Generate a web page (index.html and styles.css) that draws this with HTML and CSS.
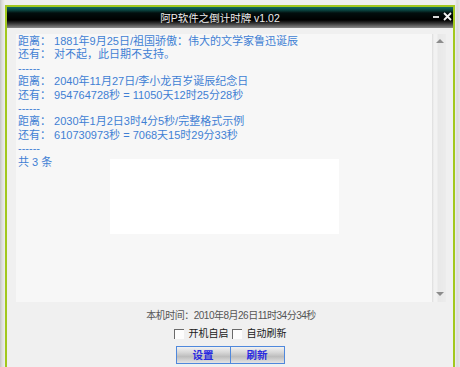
FILE: index.html
```html
<!DOCTYPE html>
<html lang="zh-CN">
  <head>
    <meta charset="UTF-8" />
    <title>阿P软件之倒计时牌 v1.02</title>
    <link rel="stylesheet" href="styles.css">
  </head>
  <body>
    <div class="window">
      <div class="titlebar">
        <span class="titlebar__text">阿P软件之倒计时牌 v1.02</span>
        <span class="titlebar__btns">
          <svg width="19" height="9" viewBox="0 0 19 9">
            <rect x="0" y="4" width="6" height="2" fill="#d8d8d8" />
            <path d="M11 1 L18 8 M18 1 L11 8" stroke="#f2f2f2" stroke-width="1.8" />
          </svg>
        </span>
      </div>
      <div class="main">
        <div class="memo">
          <div class="memo__text">
            <div class="line">距离： 1881年9月25日/祖国骄傲：伟大的文学家鲁迅诞辰</div>
            <div class="line">还有： 对不起，此日期不支持。</div>
            <div class="line">------</div>
            <div class="line">距离： 2040年11月27日/李小龙百岁诞辰纪念日</div>
            <div class="line">还有： 954764728秒 = 11050天12时25分28秒</div>
            <div class="line">------</div>
            <div class="line">距离： 2030年1月2日3时4分5秒/完整格式示例</div>
            <div class="line">还有： 610730973秒 = 7068天15时29分33秒</div>
            <div class="line">------</div>
            <div class="line">共 3 条</div>
            <div class="memo__blank"></div>
          </div>
          <div class="scrollbar">
            <span class="scrollbar__up"></span>
            <span class="scrollbar__down"></span>
          </div>
        </div>
        <div class="clock">本机时间：2010年8月26日11时34分34秒</div>
        <div class="opts">
          <label class="opt"><span class="check"></span>开机自启</label>
          <label class="opt"><span class="check"></span>自动刷新</label>
        </div>
        <div class="buttons">
          <button class="btn">设置</button><button class="btn">刷新</button>
        </div>
      </div>
    </div>
  </body>
</html>
```

FILE: styles.css
```css
* {
  box-sizing: border-box;
}

body {
  margin: 0;
  padding: 5px 0 0 5px;
  background:
    linear-gradient(to right, #c4c4c4, #dcdcdc 2px, #e8e8e8 4px, #eeeeee 5px, #eeeeee 455px, #dadada 457px, #e6e6e6 460px);
  font-family: "Liberation Sans", "Noto Sans CJK SC", sans-serif;
  font-size: 11px;
  height: 367px;
  overflow: hidden;
}

.window {
  width: 450px;
  height: 380px;
  border: 2px solid #a2c81e;
  border-bottom: none;
  background: #f0f0f0;
}

.titlebar {
  height: 21px;
  background: linear-gradient(#106a64, #0a4642 3px, #020e0e 6px, #000 13px, #2e2e2e 16px, #8a8a8a 21px);
  color: #ececec;
  display: flex;
  align-items: center;
  justify-content: center;
  padding-right: 20px;
  position: relative;
  font-size: 10.5px;
}

.titlebar__btns {
  position: absolute;
  right: 1px;
  top: 5px;
  display: flex;
}

.main {
  padding: 6px 7px 0 9px;
}

.memo {
  display: flex;
  height: 268px;
}

.memo__text {
  flex: 1;
  background: #f7f7f7;
  color: #3f7fd4;
  padding: 1px 0 0 2px;
  line-height: 13.4px;
  font-size: 11px;
  position: relative;
}

.line {
  white-space: pre;
}

.memo__blank {
  position: absolute;
  left: 94px;
  top: 125px;
  width: 229px;
  height: 75px;
  background: #ffffff;
}

.scrollbar {
  width: 14px;
  background: linear-gradient(to right, #dcdcdc, #f2f2f2 2px, #f2f2f2 5px, #e8e8e8 6px, #ececec);
  display: flex;
  flex-direction: column;
  justify-content: space-between;
  align-items: center;
  padding: 5px 0 6px 1px;
}

.scrollbar__up,
.scrollbar__down {
  width: 0;
  height: 0;
  border-left: 4px solid transparent;
  border-right: 4px solid transparent;
}

.scrollbar__up {
  border-bottom: 4px solid #8c8c8c;
}

.scrollbar__down {
  border-top: 4px solid #8c8c8c;
}

.clock {
  text-align: center;
  color: #555555;
  font-size: 10px;
  line-height: 13px;
  margin-top: 7px;
  letter-spacing: -0.5px;
}

.opts {
  display: flex;
  justify-content: center;
  gap: 3px;
  margin-top: 5px;
  margin-right: 2px;
  color: #1a1a1a;
  font-size: 10px;
  line-height: 14px;
}

.opt {
  display: flex;
  align-items: center;
  gap: 5px;
}

.check {
  width: 10px;
  height: 10px;
  border-top: 1px solid #6a6a6a;
  border-left: 1px solid #6a6a6a;
  background: #fdfdfd;
}

.buttons {
  display: flex;
  justify-content: center;
  margin-top: 5px;
  margin-right: 2px;
}

.btn {
  width: 55px;
  height: 18px;
  border: 1px solid #4f88dc;
  background: linear-gradient(#f2f2f2, #d6d6d6 35%, #bdbdbd 60%, #e4e4e4);
  color: #2a2ae0;
  font-family: "Liberation Sans", "Noto Sans CJK SC", sans-serif;
  font-size: 10.5px;
  font-weight: bold;
  line-height: 16px;
  padding: 0;
}

.btn + .btn {
  margin-left: -1px;
}
```
